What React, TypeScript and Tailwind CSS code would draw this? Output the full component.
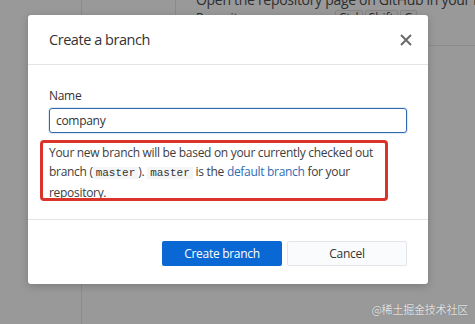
import React from "react";

export default function App() {
  const sans = { fontFamily: '"Open Sans", "Noto Sans", sans-serif' };
  const mono = { fontFamily: '"Liberation Mono", monospace' };
  return (
    <div
      className="relative w-[475px] h-[324px] overflow-hidden bg-[#999999] flex"
      style={sans}
    >
      {/* background app (dimmed) */}
      <div className="w-[82px] h-full border-r border-[#8a8a8a] shrink-0" />
      <div className="flex-1 flex flex-col min-w-0">
        <div className="flex h-[46px] border-b border-[#8c8c8c]">
          <div className="w-[94px] shrink-0 border-r border-[#8a8a8a]" />
          <div className="flex-1 min-w-0 pl-[20px] text-[#2e2e2e] leading-[14px] whitespace-nowrap overflow-hidden">
            <div className="text-[14px] tracking-[-0.3px] -mt-[7px]">
              Open the repository page on GitHub in your browser
            </div>
            <div className="flex items-center text-[12px] mt-[3px] gap-[2px]">
              <span className="mr-[26px]">Repository menu or</span>
              <span className="border border-[#888] rounded-[2px] px-[3px]">Ctrl</span>
              <span className="border border-[#888] rounded-[2px] px-[3px]">Shift</span>
              <span className="border border-[#888] rounded-[2px] px-[3px]">G</span>
            </div>
          </div>
        </div>
        <div className="flex-1" />
      </div>

      <div
        className="absolute right-[7px] bottom-[7px] text-[11px] text-[#e2e2e2] tracking-[-0.2px] [text-shadow:0_0_1px_#6e6e6e]"
        style={{ fontFamily: '"Noto Sans CJK SC", sans-serif' }}
      >
        @稀土掘金技术社区
      </div>

      {/* dialog */}
      <div className="absolute left-[28px] top-[15px] w-[400px] h-[269px] bg-white rounded-[3px] shadow-[0_2px_8px_rgba(0,0,0,0.2)] flex flex-col">
        <div className="h-[50px] shrink-0 flex items-center justify-between pl-[21px] pr-[16px] border-b border-[#e4e4e4]">
          <span className="text-[14.5px] tracking-[-0.45px] text-[#333]">Create a branch</span>
          <svg width="12" height="12" viewBox="0 0 12 12">
            <path d="M1 1 L11 11 M11 1 L1 11" stroke="#6a6a6a" strokeWidth="2" />
          </svg>
        </div>
        <div className="relative px-[21px] pt-[22px] pb-[17px] border-b border-[#e4e4e4] text-[12px] tracking-[-0.3px]">
          <div className="leading-[18px] text-[#333]">Name</div>
          <div className="mt-[3px] h-[25px] border border-[#2f6bb0] rounded-[3px] flex items-center px-[6px] text-[#333] shadow-[0_0_0_1px_rgba(47,107,176,0.15)]">
            company
          </div>
          <p className="mt-[10px] leading-[19px] text-[#3d3d3d]">
            Your new branch will be based on your currently checked out branch (
            <code className="bg-[#f4f5f6] px-[3px] text-[11px] tracking-normal text-[#333]" style={mono}>
              master
            </code>
            ).{" "}
            <code className="bg-[#f4f5f6] px-[3px] text-[11px] tracking-normal text-[#333]" style={mono}>
              master
            </code>{" "}
            is the <span className="text-[#2d6db5]">default branch</span> for your
            repository.
          </p>
          <div className="absolute left-[12px] top-[75px] w-[348px] h-[61px] border-[3px] border-[#d9332a] rounded-[4px]" />
        </div>
        <div className="flex-1 flex justify-end items-start pt-[21px] pr-[21px] gap-[5px]">
          <button className="w-[120px] h-[25px] bg-[#0a68d4] text-white text-[12px] tracking-[-0.3px] rounded-[2px]">
            Create branch
          </button>
          <button className="w-[120px] h-[25px] bg-[#fafbfc] border border-[#e3e5e8] text-[#333] text-[12px] tracking-[-0.3px] rounded-[2px]">
            Cancel
          </button>
        </div>
      </div>
    </div>
  );
}
